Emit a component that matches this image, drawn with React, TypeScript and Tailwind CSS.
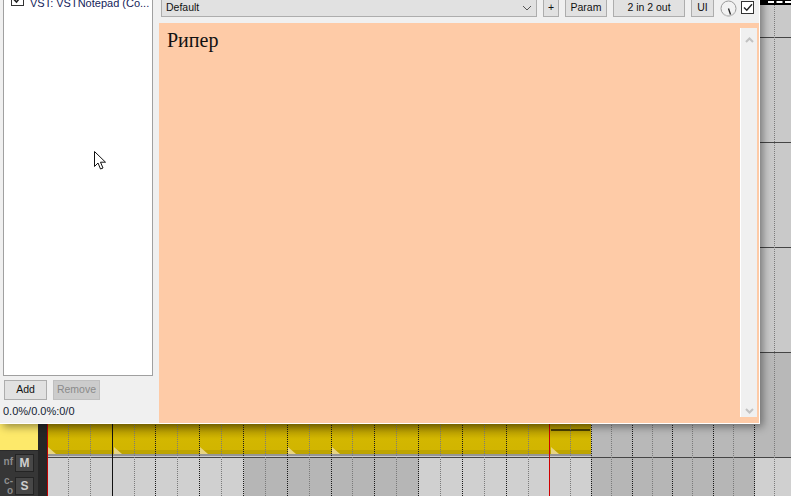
import type React from "react"

// arrange grid: [x, kind]  (d = dark dotted, l = light dotted, s = solid)
const grid: [number, string][] = [
  [69, "l"], [91, "l"], [113, "s"], [135, "l"], [156, "d"], [178, "l"], [200, "d"], [222, "l"],
  [244, "d"], [266, "l"], [288, "d"], [310, "l"], [332, "d"], [353, "l"], [375, "d"], [397, "l"],
  [419, "d"], [441, "l"], [463, "d"], [485, "l"], [507, "d"], [529, "l"], [571, "l"], [592, "d"],
  [612, "l"], [633, "d"], [653, "l"], [673, "d"], [693, "l"], [714, "d"], [734, "l"], [755, "d"],
  [775, "l"],
]

const marks = [48, 114, 200, 288, 332, 551]
const LANE_X = 48

// heights include the 1px bottom border (border-box)
const tracks = [
  { h: "h-[33px]" },
  { h: "h-[105px]" },
  { h: "h-[105px]" },
  { h: "h-[105px]" },
  { h: "h-[105px]", sel: true },
  { h: "flex-1", last: true },
]

const Btn: React.FC<{ w: string; label: string; disabled?: boolean; top?: boolean }> = ({ w, label, disabled, top }) => (
  <div
    className={`${w} h-full flex justify-center border text-[10.5px] ${top ? "items-start pt-[3px]" : "items-center"} ${
      disabled ? "bg-[#cccccc] border-[#bfbfbf] text-[#8a8a8a]" : "bg-[#e1e1e1] border-[#adadad] text-[#111]"
    }`}
  >
    {label}
  </div>
)

const Chevron: React.FC<{ up?: boolean }> = ({ up }) => (
  <svg width="9" height="6" viewBox="0 0 9 6">
    <path
      d={up ? "M1 5 L4.5 1.5 L8 5" : "M1 1 L4.5 4.5 L8 1"}
      fill="none"
      stroke="#c2c2c2"
      strokeWidth="2"
    />
  </svg>
)

const FxWindow: React.FC = () => (
  <div className="absolute left-0 top-[-8px] w-[760px] h-[432px] bg-[#f0f0f0] border-r border-b border-white shadow-[3px_3px_8px_rgba(0,0,0,0.4)] flex font-['Liberation_Sans',Arial,sans-serif]">
    {/* left: chain list */}
    <div className="w-[159px] pl-[3px] flex flex-col">
      <div className="w-[150px] h-[384px] bg-white border border-[#a0a0a0] pt-[4px] pl-[7px]">
        <div className="flex h-[13px] items-start">
          <div className="w-[13px] h-[13px] -mt-[4px] border border-[#333] bg-white flex items-center justify-center">
            <svg width="9" height="9" viewBox="0 0 9 9">
              <path d="M1 4.5 L3.5 7 L8 1.5" fill="none" stroke="#222" strokeWidth="1.6" />
            </svg>
          </div>
          <span className="ml-[6px] text-[11px] leading-[13px] text-[#15235a] whitespace-nowrap">
            VST: VSTNotepad (Co...
          </span>
        </div>
      </div>
      <div className="flex h-[20px] mt-[4px] ml-[1px] gap-[6px]">
        <Btn w="w-[43px]" label="Add" />
        <Btn w="w-[47px]" label="Remove" disabled />
      </div>
      <div className="mt-[5px] text-[11px] leading-[13px] text-[#141c33]">0.0%/0.0%:0/0</div>
    </div>

    {/* right: toolbar + plugin UI */}
    <div className="flex-1 flex flex-col pt-[4px]">
      <div className="flex h-[21px] items-stretch">
        <div className="ml-[2px] w-[376px] bg-[#e1e1e1] border border-[#adadad] flex items-start justify-between pl-[4px] pr-[4px] pt-[3px] text-[10.5px] text-[#111]">
          <span>Default</span>
          <svg className="mt-[5px]" width="10" height="6" viewBox="0 0 10 6">
            <path d="M1 1 L5 5 L9 1" fill="none" stroke="#555" strokeWidth="1" />
          </svg>
        </div>
        <div className="ml-[6px] flex h-full gap-[6px]">
          <Btn w="w-[16px]" label="+" top />
          <Btn w="w-[42px]" label="Param" top />
          <Btn w="w-[72px]" label="2 in 2 out" top />
          <Btn w="w-[23px]" label="UI" top />
        </div>
        <div className="ml-[6px] flex items-end">
          <svg width="17" height="17" viewBox="0 0 17 17">
            <circle cx="8.5" cy="8.5" r="7.5" fill="#f2f2f2" stroke="#9a9a9a" strokeWidth="1" />
            <path d="M3 13.5 A7.5 7.5 0 0 0 15 12" fill="none" stroke="#c8c8c8" strokeWidth="1.2" />
            <line x1="8.5" y1="8.5" x2="10.5" y2="14.5" stroke="#222" strokeWidth="1.3" />
          </svg>
        </div>
        <div className="ml-[4px] flex items-end pb-[3px]">
          <div className="w-[13px] h-[13px] border border-[#333] bg-white flex items-center justify-center">
            <svg width="10" height="9" viewBox="0 0 10 9">
              <path d="M1 4.5 L3.8 7.3 L9 1.3" fill="none" stroke="#222" strokeWidth="1.4" />
            </svg>
          </div>
        </div>
      </div>

      <div className="mt-[6px] flex-1 bg-[#fecba7] flex">
        <div className="flex-1 pl-[8px] pt-[2px] font-['Liberation_Serif','Times_New_Roman',serif] text-[20px] text-[#111]">
          Рипер
        </div>
        <div className="w-[17px] mt-[5px] mb-[6px] mr-[2px] bg-[#f0f0f0] border-l border-white flex flex-col items-center justify-between pt-[9px] pb-[3px]">
          <Chevron up />
          <Chevron />
        </div>
      </div>
    </div>
  </div>
)

const Arrange: React.FC = () => (
  <div className="absolute inset-0 flex">
    {/* track control panels */}
    <div className="w-[38px] flex flex-col bg-[#333]">
      <div className="h-[5px]" />
      {tracks.map((t, i) => (
        <div
          key={i}
          className={`${t.h} ${t.last ? "" : "border-b border-[#2a2a2a]"} ${t.sel ? "bg-[#fde96a]" : "bg-[#363636]"} relative`}
        >
          {t.last && (
            <div className="flex pt-[3px]">
              <div className="w-[13px] flex flex-col items-end text-[10px] leading-[10px] font-bold text-[#8e8e8e] font-['Liberation_Sans',Arial,sans-serif]">
                <span className="mt-[3px]">nf</span>
                <span className="mt-[9px]">c-</span>
                <span>o</span>
              </div>
              <div className="ml-[2px] flex flex-col gap-[5px]">
                <div className="w-[19px] h-[18px] bg-[#474747] border border-[#242424] flex items-center justify-center text-[12px] font-bold text-[#cfcfcf] font-['Liberation_Sans',Arial,sans-serif]">
                  M
                </div>
                <div className="w-[19px] h-[18px] bg-[#474747] border border-[#242424] flex items-center justify-center text-[12px] font-bold text-[#cfcfcf] font-['Liberation_Sans',Arial,sans-serif]">
                  S
                </div>
              </div>
            </div>
          )}
        </div>
      ))}
    </div>
    <div className="w-[9px] bg-[#262626]" />

    {/* timeline */}
    <div className="flex-1 flex flex-col border-l border-[#c00000]">
      <div className="h-[5px] bg-black pt-[1px]">
        <div className="border-t-2 border-dashed border-white ml-[720px]" />
      </div>
      <div className="flex-1 flex flex-col relative">
        {tracks.map((t, i) => (
          <div
            key={i}
            className={`${t.h} ${t.last ? "bg-[#d0d0d0]" : "border-b border-[#454545]"} ${
              t.sel ? "bg-[#b8b8b8]" : t.last ? "" : "bg-[#c9c9c9]"
            } relative`}
          >
            {t.last && (
              <>
                <div className="absolute top-0 bottom-0 bg-[#b6b6b6]" style={{ left: 244 - LANE_X, width: 175 }} />
                <div className="absolute top-0 bottom-0 bg-[#b6b6b6]" style={{ left: 591 - LANE_X, width: 164 }} />
              </>
            )}
            {t.sel && (
              <div className="absolute left-0 top-0 bottom-0 w-[543px] flex flex-col">
                <div className="flex-1 bg-[linear-gradient(to_bottom,#a88e00_71px,#d3b700_86px,#d1b500)]" />
                <div className="h-[4px] bg-[#bea400]" />
                <div className="h-[2px] bg-[#959595]" />
                <div className="h-[1px] bg-[#cacaca]" />
                <div className="absolute h-[2px] bg-[#4a4000]" style={{ left: 551 - LANE_X, top: 76, width: 39 }} />
                {marks.map((m) => (
                  <svg
                    key={m}
                    className="absolute bottom-[3px]"
                    style={{ left: m - LANE_X }}
                    width="8"
                    height="7"
                    viewBox="0 0 8 7"
                  >
                    <polygon points="0,0 0,7 8,7" fill="#e6d384" />
                  </svg>
                ))}
              </div>
            )}
          </div>
        ))}

        {/* grid lines over lanes */}
        {grid.map(([x, k]) => (
          <div
            key={x}
            className={`absolute top-0 bottom-0 border-l ${
              k === "s" ? "border-solid border-[#111]" : k === "d" ? "border-dotted border-[#1a1a1a]" : "border-dotted border-[#7a7a7a]"
            }`}
            style={{ left: x - LANE_X - 1 }}
          />
        ))}
        {/* edit cursor */}
        <div className="absolute top-0 bottom-0 w-[1px] bg-[#d00000]" style={{ left: 550 - LANE_X - 1 }} />
      </div>
    </div>
  </div>
)

export default function App() {
  return (
    <div className="relative w-[791px] h-[496px] overflow-hidden bg-[#c9c9c9]">
      <Arrange />
      <FxWindow />
      {/* mouse pointer */}
      <svg className="absolute left-[94px] top-[151px]" width="13" height="20" viewBox="0 0 13 20">
        <path
          d="M0.5 0.5 L0.5 15.5 L4 12 L6.5 18 L9 17 L6.5 11.2 L11.5 11.2 Z"
          fill="white"
          stroke="#111"
          strokeWidth="1"
        />
      </svg>
    </div>
  )
}
